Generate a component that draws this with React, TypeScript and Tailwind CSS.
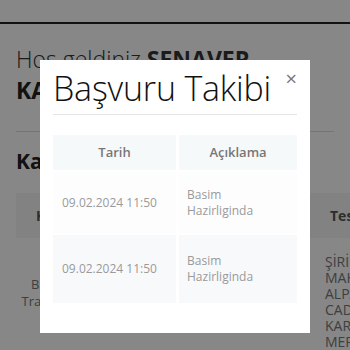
import React from "react";

export default function App() {
  const font = { fontFamily: '"Open Sans", "Noto Sans", sans-serif' };
  return (
    <div className="relative w-[350px] h-[350px] overflow-hidden bg-white" style={font}>
      {/* background page */}
      <div className="h-[24px] border-b-2 border-[#222]"></div>
      <div className="pl-4">
        <div className="pt-[20px] text-[23px] leading-[30px] font-light text-[#333]">
          Hoş geldiniz <span className="font-bold">ŞENAVER</span>
        </div>
        <div className="mt-[1px] text-[23px] leading-[30px] font-bold text-[#222]">KARA</div>
        <div className="mt-[26px] mr-4 border-t border-[#ddd]"></div>
        <div className="mt-[16px] text-[21px] leading-[26px] font-bold text-[#222]">Kartlar</div>
        <div className="mt-[19px] flex h-[45px] items-center bg-[#f5f5f5] text-[14px] font-bold text-[#555]">
          <div className="w-[70px] text-center">Kart</div>
          <div className="flex-1"></div>
          <div className="w-[20px] whitespace-nowrap">Teslim</div>
        </div>
        <div className="flex items-start text-[13px] leading-[17px] text-[#777]">
          <div className="w-[62px] pt-[38px] text-center whitespace-nowrap">Baskı<br />Transfer</div>
          <div className="flex-1"></div>
          <div className="w-[25px] pt-[16px] text-[14px] leading-[16px] whitespace-nowrap">
            ŞİRİN<br />MAH<br />ALPA<br />CADI<br />KARA<br />MER
          </div>
        </div>
      </div>

      {/* overlay */}
      <div className="absolute inset-0 bg-[rgba(0,0,0,0.47)]"></div>

      {/* modal */}
      <div className="absolute left-[40px] top-[60px] w-[270px] h-[273px] bg-white px-[13px]">
        <div className="relative flex items-center pt-[8px] pb-[6px]">
          <h1 className="text-[34px] leading-[40px] font-light text-[#111] tracking-[-0.2px] whitespace-nowrap">Başvuru Takibi</h1>
          <span className="absolute right-[0px] top-[9px] text-[20px] leading-[20px] text-[#777]">×</span>
        </div>
        <div className="border-t border-[#e6e6e6]"></div>
        <div className="mt-[20px]">
          <div className="flex h-[35px] gap-[3px] text-[13px] font-semibold text-[#777]">
            <div className="w-[123px] flex items-center justify-center bg-[#f6f9fa]">Tarih</div>
            <div className="flex-1 flex items-center justify-center bg-[#f6f9fa]">Açıklama</div>
          </div>
          <div className="mt-[2px] flex h-[61px] gap-[3px] text-[12px] leading-[16px] text-[#9a9a9a]">
            <div className="w-[123px] flex items-center pl-[9px] bg-[#fdfdfe]">09.02.2024 11:50</div>
            <div className="flex-1 flex items-center pl-[8px] bg-[#fdfdfe]">Basim<br />Hazirliginda</div>
          </div>
          <div className="mt-[2px] flex h-[68px] gap-[3px] text-[12px] leading-[16px] text-[#9a9a9a]">
            <div className="w-[123px] flex items-center pl-[9px] bg-[#f8f9fb]">09.02.2024 11:50</div>
            <div className="flex-1 flex items-center pl-[8px] bg-[#f8f9fb]">Basim<br />Hazirliginda</div>
          </div>
        </div>
      </div>
    </div>
  );
}
